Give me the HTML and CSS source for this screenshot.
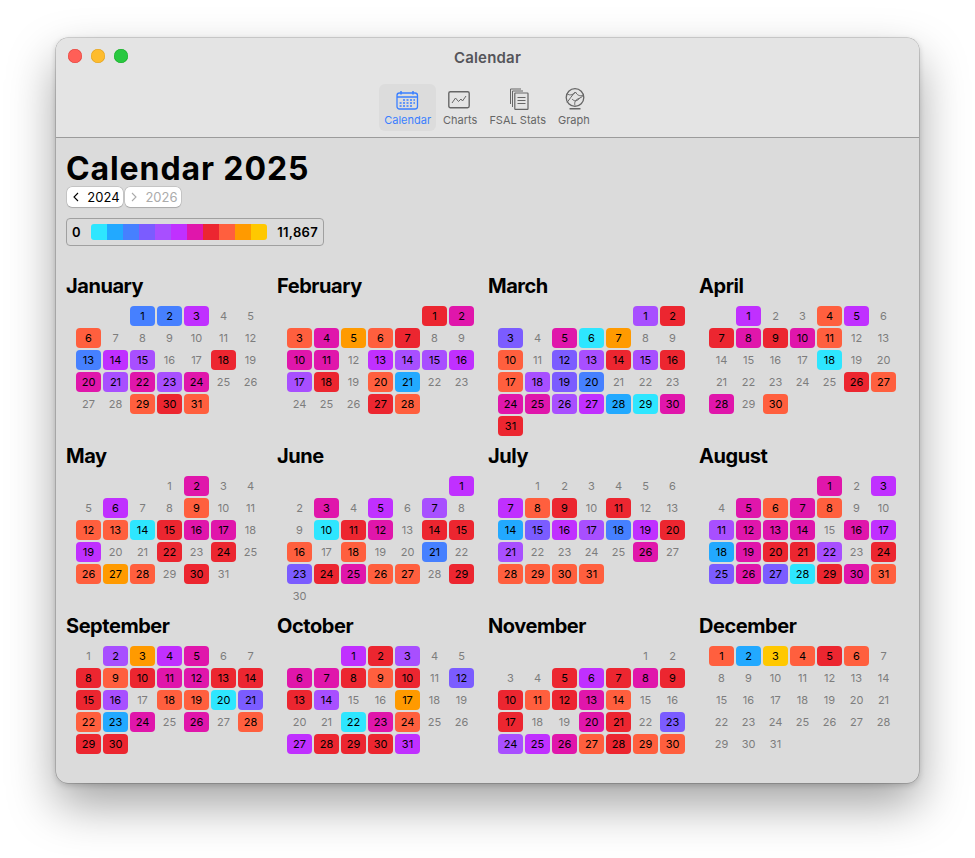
FILE: index.html
```html
<!DOCTYPE html>
<html lang="en">
<head>
<meta charset="utf-8">
<title>Calendar</title>
<link rel="stylesheet" href="styles.css">
</head>
<body>
<div class="window">
  <header class="chrome">
    <div class="titlebar">
      <div class="lights"><span class="light red"></span><span class="light yellow"></span><span class="light green"></span></div>
      <div class="wintitle">Calendar</div>
    </div>
    <nav class="toolbar">
      <div class="tool active">
        <svg class="ticon" width="24" height="20" viewBox="0 0 24 20" fill="none" stroke="currentColor"><rect x="1" y="3" width="20.500" height="16" rx="2.500" stroke-width="1.300"/><path d="M1 7h20.500" stroke-width="1.600"/><path d="M5 1v3.500M17 1v3.500" stroke-width="1.500"/><path d="M7 9.900h2M10.500 9.900h2M14 9.900h2M17.400 9.900h1.600M3.600 12.900h2M7 12.900h2M10.500 12.900h2M14 12.900h2M17.400 12.900h1.600M3.600 15.900h2M7 15.900h2M10.500 15.900h2M14 15.900h2" stroke-width="1.500"/></svg>
        <span>Calendar</span>
      </div>
      <div class="tool">
        <svg class="ticon" width="24" height="20" viewBox="0 0 24 20" fill="none" stroke="currentColor"><rect x=".8" y="1.700" width="20.400" height="16" rx="1.600" stroke-width="1.400"/><path d="M4 13l3.500-5 3 3.500 2.500-2.500 1.500 2 3.500-5" stroke-width="1"/></svg>
        <span>Charts</span>
      </div>
      <div class="tool">
        <svg class="ticon" width="24" height="22" viewBox="0 0 24 22" fill="none" stroke="currentColor"><path d="M15 1H4.500v15" stroke-width="1"/><path d="M17 3H6.500v16" stroke-width="1"/><rect x="8.800" y="5" width="13.200" height="16.300" fill="#e4e4e4" stroke-width="1.200" rx=".6"/><path d="M11.500 9.500h8M11.500 12.500h8M11.500 15.500h8" stroke-width="1.200"/></svg>
        <span>FSAL Stats</span>
      </div>
      <div class="tool">
        <svg class="ticon" width="24" height="22" viewBox="0 0 24 22" fill="none" stroke="currentColor"><circle cx="13" cy="9.500" r="8.800" stroke-width="1.300"/><path d="M5 5.500c3 3 7 .5 8.500-1.500 1.500 3 4 4.500 8 3.500M5 14.500c2.500-3 5-7.500 8.500-10.500M13 17.500c-1-3 .5-6 4-7l3.500-2M10 11c2 2 4 3 7.500-.5" stroke-width="1"/><path d="M7.500 20.700h11" stroke-width="1.500"/></svg>
        <span>Graph</span>
      </div>
    </nav>
  </header>
  <main class="content">
    <h1 class="heading">Calendar 2025</h1>
    <div class="yearnav">
      <button class="yearbtn"><svg width="8" height="10" viewBox="0 0 8 10" fill="none" stroke="currentColor" stroke-width="1.100"><path d="M6 1L2 5l4 4"/></svg>2024</button>
      <button class="yearbtn off"><svg width="8" height="10" viewBox="0 0 8 10" fill="none" stroke="currentColor" stroke-width="1.100"><path d="M2 1l4 4-4 4"/></svg>2026</button>
    </div>
    <div class="legend">
      <span>0</span>
      <div class="scale"><i class="a"></i><i class="b"></i><i class="c"></i><i class="d"></i><i class="e"></i><i class="f"></i><i class="g"></i><i class="h"></i><i class="i"></i><i class="j"></i><i class="k"></i></div>
      <span class="total">11,867</span>
    </div>
    <div class="months">
      <section class="month"><h2>January</h2><div class="days">
        <b class="s2 c">1</b><b class="c">2</b><b class="f">3</b><b>4</b><b>5</b>
        <b class="i">6</b><b>7</b><b>8</b><b>9</b><b>10</b><b>11</b><b>12</b>
        <b class="c">13</b><b class="f">14</b><b class="e">15</b><b>16</b><b>17</b><b class="h">18</b><b>19</b>
        <b class="g">20</b><b class="e">21</b><b class="g">22</b><b class="e">23</b><b class="g">24</b><b>25</b><b>26</b>
        <b>27</b><b>28</b><b class="i">29</b><b class="h">30</b><b class="i">31</b>
      </div></section>
      <section class="month"><h2>February</h2><div class="days">
        <b class="s5 h">1</b><b class="g">2</b>
        <b class="i">3</b><b class="g">4</b><b class="j">5</b><b class="i">6</b><b class="h">7</b><b>8</b><b>9</b>
        <b class="g">10</b><b class="g">11</b><b>12</b><b class="f">13</b><b class="e">14</b><b class="e">15</b><b class="f">16</b>
        <b class="e">17</b><b class="h">18</b><b>19</b><b class="i">20</b><b class="b">21</b><b>22</b><b>23</b>
        <b>24</b><b>25</b><b>26</b><b class="h">27</b><b class="i">28</b>
      </div></section>
      <section class="month"><h2>March</h2><div class="days">
        <b class="s5 e">1</b><b class="h">2</b>
        <b class="d">3</b><b>4</b><b class="g">5</b><b class="a">6</b><b class="j">7</b><b>8</b><b>9</b>
        <b class="i">10</b><b>11</b><b class="d">12</b><b class="e">13</b><b class="h">14</b><b class="e">15</b><b class="h">16</b>
        <b class="i">17</b><b class="e">18</b><b class="d">19</b><b class="c">20</b><b>21</b><b>22</b><b>23</b>
        <b class="g">24</b><b class="g">25</b><b class="e">26</b><b class="f">27</b><b class="b">28</b><b class="a">29</b><b class="g">30</b>
        <b class="h">31</b>
      </div></section>
      <section class="month"><h2>April</h2><div class="days">
        <b class="s1 f">1</b><b>2</b><b>3</b><b class="i">4</b><b class="f">5</b><b>6</b>
        <b class="h">7</b><b class="g">8</b><b class="h">9</b><b class="g">10</b><b class="i">11</b><b>12</b><b>13</b>
        <b>14</b><b>15</b><b>16</b><b>17</b><b class="a">18</b><b>19</b><b>20</b>
        <b>21</b><b>22</b><b>23</b><b>24</b><b>25</b><b class="h">26</b><b class="i">27</b>
        <b class="g">28</b><b>29</b><b class="i">30</b>
      </div></section>
      <section class="month"><h2>May</h2><div class="days">
        <b class="s3">1</b><b class="g">2</b><b>3</b><b>4</b>
        <b>5</b><b class="f">6</b><b>7</b><b>8</b><b class="i">9</b><b>10</b><b>11</b>
        <b class="i">12</b><b class="i">13</b><b class="a">14</b><b class="h">15</b><b class="g">16</b><b class="g">17</b><b>18</b>
        <b class="f">19</b><b>20</b><b>21</b><b class="h">22</b><b>23</b><b class="h">24</b><b>25</b>
        <b class="i">26</b><b class="j">27</b><b class="i">28</b><b>29</b><b class="h">30</b><b>31</b>
      </div></section>
      <section class="month"><h2>June</h2><div class="days">
        <b class="s6 f">1</b>
        <b>2</b><b class="g">3</b><b>4</b><b class="f">5</b><b>6</b><b class="e">7</b><b>8</b>
        <b>9</b><b class="a">10</b><b class="h">11</b><b class="g">12</b><b>13</b><b class="h">14</b><b class="h">15</b>
        <b class="i">16</b><b>17</b><b class="i">18</b><b>19</b><b>20</b><b class="c">21</b><b>22</b>
        <b class="d">23</b><b class="h">24</b><b class="g">25</b><b class="i">26</b><b class="i">27</b><b>28</b><b class="h">29</b>
        <b>30</b>
      </div></section>
      <section class="month"><h2>July</h2><div class="days">
        <b class="s1">1</b><b>2</b><b>3</b><b>4</b><b>5</b><b>6</b>
        <b class="f">7</b><b class="i">8</b><b class="h">9</b><b>10</b><b class="h">11</b><b>12</b><b>13</b>
        <b class="b">14</b><b class="d">15</b><b class="f">16</b><b class="e">17</b><b class="c">18</b><b class="f">19</b><b class="h">20</b>
        <b class="e">21</b><b>22</b><b>23</b><b>24</b><b>25</b><b class="g">26</b><b>27</b>
        <b class="i">28</b><b class="i">29</b><b class="i">30</b><b class="i">31</b>
      </div></section>
      <section class="month"><h2>August</h2><div class="days">
        <b class="s4 g">1</b><b>2</b><b class="f">3</b>
        <b>4</b><b class="g">5</b><b class="i">6</b><b class="g">7</b><b class="i">8</b><b>9</b><b>10</b>
        <b class="e">11</b><b class="g">12</b><b class="g">13</b><b class="g">14</b><b>15</b><b class="g">16</b><b class="f">17</b>
        <b class="b">18</b><b class="g">19</b><b class="h">20</b><b class="h">21</b><b class="e">22</b><b>23</b><b class="h">24</b>
        <b class="d">25</b><b class="g">26</b><b class="d">27</b><b class="a">28</b><b class="h">29</b><b class="g">30</b><b class="i">31</b>
      </div></section>
      <section class="month"><h2>September</h2><div class="days">
        <b>1</b><b class="e">2</b><b class="j">3</b><b class="f">4</b><b class="g">5</b><b>6</b><b>7</b>
        <b class="h">8</b><b class="i">9</b><b class="h">10</b><b class="g">11</b><b class="g">12</b><b class="h">13</b><b class="h">14</b>
        <b class="h">15</b><b class="e">16</b><b>17</b><b class="i">18</b><b class="i">19</b><b class="a">20</b><b class="d">21</b>
        <b class="i">22</b><b class="b">23</b><b class="g">24</b><b>25</b><b class="g">26</b><b>27</b><b class="i">28</b>
        <b class="h">29</b><b class="h">30</b>
      </div></section>
      <section class="month"><h2>October</h2><div class="days">
        <b class="s2 f">1</b><b class="h">2</b><b class="e">3</b><b>4</b><b>5</b>
        <b class="g">6</b><b class="g">7</b><b class="h">8</b><b class="i">9</b><b class="h">10</b><b>11</b><b class="d">12</b>
        <b class="h">13</b><b class="e">14</b><b>15</b><b>16</b><b class="j">17</b><b>18</b><b>19</b>
        <b>20</b><b>21</b><b class="a">22</b><b class="g">23</b><b class="i">24</b><b>25</b><b>26</b>
        <b class="f">27</b><b class="h">28</b><b class="h">29</b><b class="h">30</b><b class="f">31</b>
      </div></section>
      <section class="month"><h2>November</h2><div class="days">
        <b class="s5">1</b><b>2</b>
        <b>3</b><b>4</b><b class="h">5</b><b class="f">6</b><b class="h">7</b><b class="g">8</b><b class="h">9</b>
        <b class="h">10</b><b class="i">11</b><b class="h">12</b><b class="g">13</b><b class="i">14</b><b>15</b><b>16</b>
        <b class="h">17</b><b>18</b><b>19</b><b class="g">20</b><b class="h">21</b><b>22</b><b class="d">23</b>
        <b class="e">24</b><b class="f">25</b><b class="g">26</b><b class="i">27</b><b class="h">28</b><b class="i">29</b><b class="i">30</b>
      </div></section>
      <section class="month"><h2>December</h2><div class="days">
        <b class="i">1</b><b class="b">2</b><b class="k">3</b><b class="i">4</b><b class="h">5</b><b class="i">6</b><b>7</b>
        <b>8</b><b>9</b><b>10</b><b>11</b><b>12</b><b>13</b><b>14</b>
        <b>15</b><b>16</b><b>17</b><b>18</b><b>19</b><b>20</b><b>21</b>
        <b>22</b><b>23</b><b>24</b><b>25</b><b>26</b><b>27</b><b>28</b>
        <b>29</b><b>30</b><b>31</b>
      </div></section>
    </div>
  </main>
</div>
</body>
</html>
```
FILE: styles.css
```css
* { box-sizing: border-box; }
html, body { margin: 0; height: 100%; background: #fff; }
body {
  padding: 38px 56px 0;
  font-family: Inter, "Liberation Sans", sans-serif;
  overflow: hidden;
}
.window {
  width: 863px;
  height: 745px;
  border-radius: 12px;
  background: #dbdbdb;
  overflow: hidden;
  box-shadow: 0 0 0 .5px rgba(0,0,0,.28), 0 22px 48px rgba(0,0,0,.36), 0 2px 6px rgba(0,0,0,.18);
}
.chrome {
  height: 100px;
  background: #e4e4e4;
  border-bottom: 1px solid #9b9b9b;
}
.titlebar {
  height: 42px;
  display: grid;
  grid-template-columns: 1fr auto 1fr;
  align-items: center;
  padding: 0 12px;
}
.lights { display: flex; gap: 9px; margin-top: -6px; }
.light { width: 14px; height: 14px; border-radius: 50%; }
.red { background: #ff5f57; box-shadow: inset 0 0 0 .5px #e0443e; }
.yellow { background: #febc2e; box-shadow: inset 0 0 0 .5px #dea123; }
.green { background: #28c840; box-shadow: inset 0 0 0 .5px #1aab29; }
.wintitle { font-size: 15px; font-weight: 600; color: #55555a; grid-column: 2; margin-top: -3px; letter-spacing: .2px; }
.toolbar {
  display: flex;
  justify-content: center;
  gap: 2px;
  height: 47px;
  margin-top: 4px;
  padding-right: 1px;
}
.tool {
  display: flex;
  flex-direction: column;
  align-items: center;
  justify-content: flex-end;
  height: 47px;
  padding: 0 5px 4px;
  border-radius: 6px;
  color: #666;
  font-size: 11px;
  line-height: 13px;
  white-space: nowrap;
}
.ticon { display: block; margin-bottom: 4px; }
.tool.active { background: #dcdcdc; color: #3a7fff; }
.content { padding: 12px 10px 0; }
.heading {
  margin: 0;
  font-size: 32px;
  line-height: 37px;
  font-weight: 700;
  color: #000;
  letter-spacing: .9px;
}
.yearnav { display: flex; gap: 2px; padding-left: 1px; }
.yearbtn {
  width: 56px;
  height: 20px;
  display: flex;
  align-items: center;
  justify-content: center;
  gap: 7px;
  padding: 0 0 0 2px;
  font: 400 13px/1 Inter, "Liberation Sans", sans-serif;
  background: #fff;
  color: #000;
  border: 0;
  border-radius: 5px;
  box-shadow: 0 0 0 .5px rgba(0,0,0,.18), 0 .5px 1px rgba(0,0,0,.15);
}
.yearbtn.off { color: #ababab; }
.legend {
  display: flex;
  align-items: center;
  justify-content: space-between;
  width: 258px;
  height: 28px;
  margin-top: 11px;
  padding: 0 5px;
  border: 1px solid #a0a0a0;
  border-radius: 4px;
  font-size: 13px;
  font-weight: 600;
  color: #000;
}
.total { letter-spacing: .3px; }
.scale { display: flex; height: 16px; border-radius: 3px; overflow: hidden; }
.scale i { display: block; width: 16px; }
.months {
  display: grid;
  grid-template-columns: repeat(4, 211px);
  grid-auto-rows: 170px;
  margin-top: 28px;
}
.month h2 {
  margin: 0;
  font-size: 20px;
  line-height: 24px;
  font-weight: 700;
  color: #000;
  letter-spacing: -.45px;
}
.days {
  display: grid;
  grid-template-columns: repeat(7, 25px);
  grid-auto-rows: 20px;
  gap: 2px;
  padding-left: 10px;
  margin-top: 8px;
}
.days b {
  display: flex;
  align-items: center;
  justify-content: center;
  border-radius: 4px;
  font-size: 11px;
  font-weight: 400;
  color: #7d7d7d;
}
.s1 { grid-column-start: 2; }
.s2 { grid-column-start: 3; }
.s3 { grid-column-start: 4; }
.s4 { grid-column-start: 5; }
.s5 { grid-column-start: 6; }
.s6 { grid-column-start: 7; }
.days b.a, .days b.b, .days b.c, .days b.d, .days b.e, .days b.f, .days b.g, .days b.h, .days b.i, .days b.j, .days b.k { color: #000; }
.a { background: #2ee6ff; }
.b { background: #22a9ff; }
.c { background: #4680ff; }
.d { background: #7b5cff; }
.e { background: #a84fff; }
.f { background: #c030ff; }
.g { background: #e016ab; }
.h { background: #ec2630; }
.i { background: #ff5f3e; }
.j { background: #ff9a00; }
.k { background: #ffc800; }
```
